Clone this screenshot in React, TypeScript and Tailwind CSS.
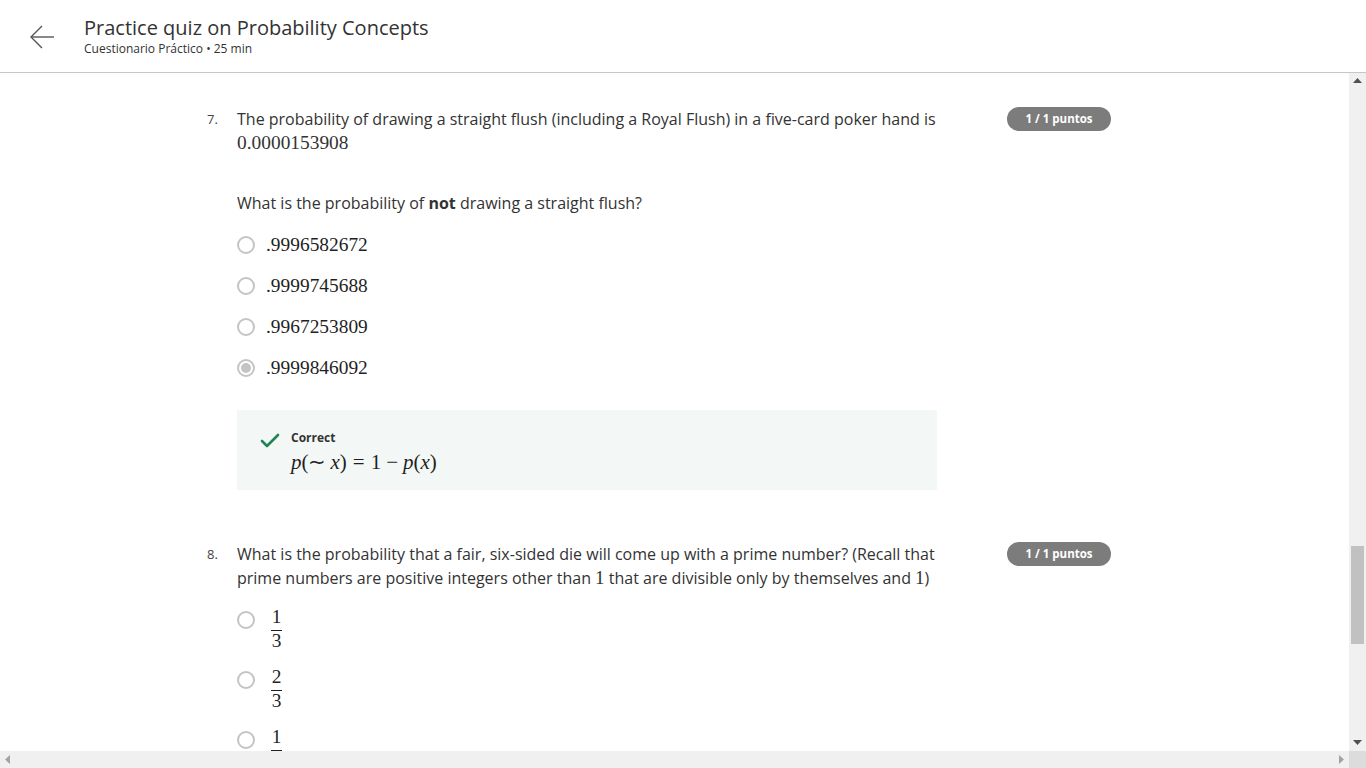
import { Check } from "lucide-react";

const math = "font-['Liberation_Serif',serif]";

const Radio = ({ selected = false }: { selected?: boolean }) => (
  <span className="w-[18px] h-[18px] rounded-full border-2 border-[#c4c4c4] flex items-center justify-center shrink-0">
    {selected && <span className="w-[10px] h-[10px] rounded-full bg-[#c4c4c4]" />}
  </span>
);

const Badge = () => (
  <div className="ml-[70px] w-[104px] h-[24px] rounded-full bg-[#7c7c7c] text-white text-[11.5px] font-bold flex items-center justify-center shrink-0">
    1 / 1 puntos
  </div>
);

const Fraction = ({ num, den }: { num: string; den: string }) => (
  <span className={`${math} text-[19.4px] text-[#1f1f1f] flex flex-col items-center mt-[17px] ml-[16px]`}>
    <span className="leading-[20px]">{num}</span>
    <span className="h-px w-[11px] bg-[#1f1f1f] mt-[3px]" />
    <span className="leading-[20px]">{den}</span>
  </span>
);

const q7Options = [
  { v: ".9996582672", selected: false },
  { v: ".9999745688", selected: false },
  { v: ".9967253809", selected: false },
  { v: ".9999846092", selected: true },
];

export default function App() {
  return (
    <div className="h-screen w-full flex flex-col bg-white overflow-hidden font-['Open_Sans',sans-serif] text-[#333]">
      {/* header */}
      <header className="h-[73px] shrink-0 border-b border-[#c6c6c6] flex items-center">
        <svg width="26" height="24" viewBox="0 0 26 24" className="ml-[29px] mr-[29px] mt-[2px]" fill="none" stroke="#555" strokeWidth="1.4">
          <path d="M25 12H2" />
          <path d="M13 1L2 12l11 11" />
        </svg>
        <div className="flex flex-col">
          <h1 className="text-[20px] leading-[26px] text-[#333]">Practice quiz on Probability Concepts</h1>
          <p className="text-[12px] leading-[16px] text-[#333]">Cuestionario Práctico • 25 min</p>
        </div>
      </header>

      <div className="flex-1 flex min-h-0">
        <main className="flex-1 overflow-hidden pl-[207px] pt-[34px]">
          {/* question 7 */}
          <section className="flex">
            <span className="w-[30px] text-[13px] leading-[24px] text-[#444]">7.</span>
            <div className="w-[700px]">
              <p className="text-[16px] leading-[24px]">
                The probability of drawing a straight flush (including a Royal Flush) in a five-card poker hand is
                <br />
                <span className={`${math} text-[19.4px]`}>0.0000153908</span>
              </p>
              <p className="text-[16px] leading-[24px] mt-[36px]">
                What is the probability of <strong className="font-bold">not</strong> drawing a straight flush?
              </p>
              <div className="mt-[9px] flex flex-col">
                {q7Options.map((o) => (
                  <div key={o.v} className="h-[41px] flex items-center">
                    <Radio selected={o.selected} />
                    <span className={`${math} text-[19.4px] text-[#1f1f1f] ml-[11px]`}>{o.v}</span>
                  </div>
                ))}
              </div>
              <div className="mt-[22px] h-[80px] bg-[#f3f8f6] flex pl-[21px] pt-[18px]">
                <Check className="w-[24px] h-[24px] text-[#1f8354] mt-[1px]" strokeWidth={2.6} />
                <div className="ml-[9px] flex flex-col">
                  <span className="text-[12px] font-bold leading-[18px] text-[#333] mt-[1px]">Correct</span>
                  <span className={`${math} text-[21px] leading-[26px] text-[#1f1f1f] mt-[2px] flex items-baseline`}>
                    <i>p</i>(∼<i className="ml-[4px]">x</i>)<span className="mx-[6px]">=</span>1<span className="mx-[5px]">−</span><i>p</i>(<i>x</i>)
                  </span>
                </div>
              </div>
            </div>
            <Badge />
          </section>

          {/* question 8 */}
          <section className="flex mt-[52px]">
            <span className="w-[30px] text-[13px] leading-[24px] text-[#444]">8.</span>
            <div className="w-[700px]">
              <p className="text-[16px] leading-[24px]">
                What is the probability that a fair, six-sided die will come up with a prime number? (Recall that prime numbers are positive integers other than{" "}
                <span className={`${math} text-[19px] leading-[20px]`}>1</span> that are divisible only by themselves and{" "}
                <span className={`${math} text-[19px] leading-[20px]`}>1</span>)
              </p>
              <div className="flex flex-col">
                {[
                  ["1", "3"],
                  ["2", "3"],
                  ["1", "6"],
                ].map(([n, d], i) => (
                  <div key={i} className="h-[60px] flex items-start">
                    <span className="mt-[21px]">
                      <Radio />
                    </span>
                    <Fraction num={n} den={d} />
                  </div>
                ))}
              </div>
            </div>
            <Badge />
          </section>
        </main>

        {/* vertical scrollbar */}
        <div className="w-[17px] shrink-0 bg-[#f0f0f0] flex flex-col items-center">
          <svg width="9" height="5" viewBox="0 0 9 5" className="mt-[5px]">
            <path d="M0 5L4.5 0L9 5Z" fill="#505050" />
          </svg>
          <div className="flex-1 w-full flex flex-col items-center">
            <div className="h-[463px] shrink-0" />
            <div className="w-[13px] h-[98px] bg-[#c1c1c1]" />
          </div>
          <svg width="9" height="5" viewBox="0 0 9 5" className="mb-[6px]">
            <path d="M0 0L9 0L4.5 5Z" fill="#505050" />
          </svg>
        </div>
      </div>

      {/* horizontal scrollbar */}
      <div className="h-[17px] shrink-0 flex bg-[#f0f0f0]">
        <div className="flex-1 flex items-center justify-between px-[5px]">
          <svg width="5" height="9" viewBox="0 0 5 9">
            <path d="M5 0L0 4.5L5 9Z" fill="#a3a3a3" />
          </svg>
          <svg width="5" height="9" viewBox="0 0 5 9">
            <path d="M0 0L5 4.5L0 9Z" fill="#a3a3a3" />
          </svg>
        </div>
        <div className="w-[17px] bg-[#dcdcdc]" />
      </div>
    </div>
  );
}
